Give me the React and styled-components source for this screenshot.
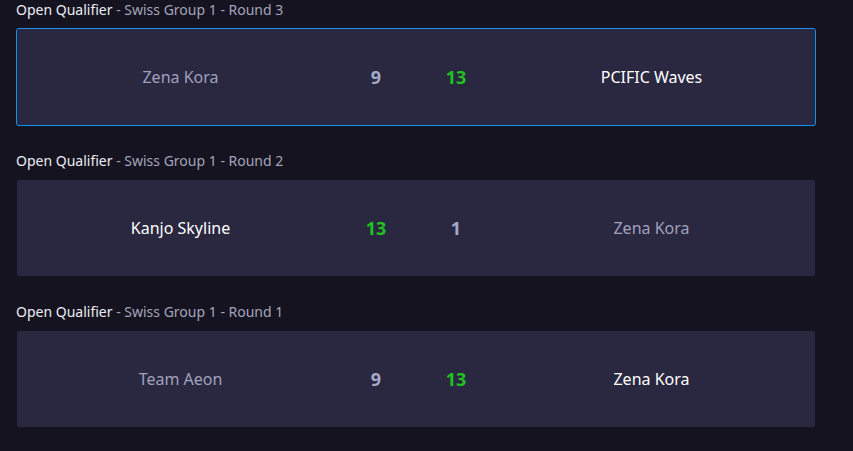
import React from "react";
import styled, { createGlobalStyle } from "styled-components";

const matches = [
  {
    id: 3,
    stage: "Swiss Group 1 - Round 3",
    home: { name: "Zena Kora", score: 9 },
    away: { name: "PCIFIC Waves", score: 13 },
    active: true,
  },
  {
    id: 2,
    stage: "Swiss Group 1 - Round 2",
    home: { name: "Kanjo Skyline", score: 13 },
    away: { name: "Zena Kora", score: 1 },
  },
  {
    id: 1,
    stage: "Swiss Group 1 - Round 1",
    home: { name: "Team Aeon", score: 9 },
    away: { name: "Zena Kora", score: 13 },
  },
];

const GlobalStyle = createGlobalStyle`
  html, body {
    margin: 0;
    padding: 0;
    background: #15131f;
    font-family: "Noto Sans", "Open Sans", sans-serif;
  }
`;

const Page = styled.div`
  padding: 0 37px 0 16px;
  min-height: 451px;
  box-sizing: border-box;
`;

const Block = styled.section`
  margin-bottom: 25px;
`;

const Title = styled.div`
  font-size: 14px;
  line-height: 20px;
  color: #a3a5bd;
  margin-bottom: 8px;
`;

const Event = styled.span`
  color: #eceef5;
`;

const Card = styled.div`
  display: grid;
  grid-template-columns: 1fr 80px 80px 1fr;
  align-items: center;
  height: 96px;
  padding: 0 8px;
  background: #2a2740;
  background-clip: padding-box;
  border: 1px solid ${(p) => (p.$active ? "#1591ef" : "transparent")};
  border-radius: 3px;
`;

const Team = styled.div`
  text-align: center;
  font-size: 16px;
  color: ${(p) => (p.$win ? "#ffffff" : "#9fa2bd")};
`;

const Score = styled.div`
  text-align: center;
  font-size: 18px;
  font-weight: 700;
  color: ${(p) => (p.$win ? "#1fc21f" : "#a5a9c6")};
`;

const App = () => {
  return (
    <>
      <GlobalStyle />
      <Page>
        {matches.map((m) => {
          const homeWin = m.home.score > m.away.score;
          return (
            <Block key={m.id}>
              <Title>
                <Event>Open Qualifier</Event> - {m.stage}
              </Title>
              <Card $active={m.active}>
                <Team $win={homeWin}>{m.home.name}</Team>
                <Score $win={homeWin}>{m.home.score}</Score>
                <Score $win={!homeWin}>{m.away.score}</Score>
                <Team $win={!homeWin}>{m.away.name}</Team>
              </Card>
            </Block>
          );
        })}
      </Page>
    </>
  );
};

export default App;
